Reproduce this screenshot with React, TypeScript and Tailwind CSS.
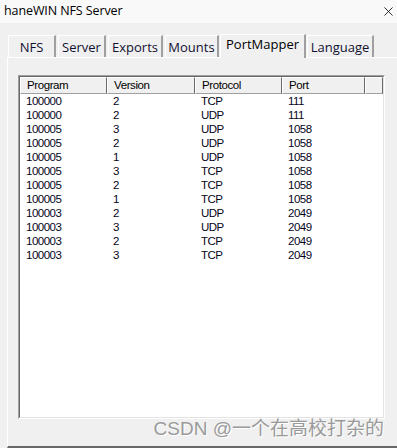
import { X } from 'lucide-react';

const rows = [
  ['100000', '2', 'TCP', '111'],
  ['100000', '2', 'UDP', '111'],
  ['100005', '3', 'UDP', '1058'],
  ['100005', '2', 'UDP', '1058'],
  ['100005', '1', 'UDP', '1058'],
  ['100005', '3', 'TCP', '1058'],
  ['100005', '2', 'TCP', '1058'],
  ['100005', '1', 'TCP', '1058'],
  ['100003', '2', 'UDP', '2049'],
  ['100003', '3', 'UDP', '2049'],
  ['100003', '2', 'TCP', '2049'],
  ['100003', '3', 'TCP', '2049'],
];

const tabs = [
  { label: 'NFS', w: 'w-[48px]' },
  { label: 'Server', w: 'w-[48px]' },
  { label: 'Exports', w: 'w-[55px]' },
  { label: 'Mounts', w: 'w-[54px]' },
  { label: 'PortMapper', w: 'w-[86px]', active: true },
  { label: 'Language', w: 'w-[67px]' },
];

const cols = ['w-[87px]', 'w-[88px]', 'w-[87px]', 'w-[83px]'];

export default function App() {
  return (
    <div className="w-[397px] h-[448px] overflow-hidden bg-[#f0f0f0] flex flex-col font-['Open_Sans',sans-serif]">
      {/* title bar */}
      <div className="h-[23px] bg-[#f9f9f9] flex items-center justify-between pl-[4px] pr-[1px] shrink-0">
        <span className="text-[12.5px] text-black leading-none tracking-[-0.1px]">haneWIN NFS Server</span>
        <X className="w-[15px] h-[15px] text-black" strokeWidth={1.3} />
      </div>

      {/* tabs */}
      <div className="flex items-end pl-[8px] pt-[10px] h-[34px] shrink-0 gap-[2px]">
        {tabs.map((t) =>
          t.active ? (
            <div
              key={t.label}
              className={`${t.w} h-[24px] -mb-px relative z-10 bg-[#f0f0f0] border-t border-l border-white border-r-2 border-r-[#a0a0a0] flex items-start justify-center pt-[3px] text-[13px] text-black leading-none -mx-[1px]`}
            >
              {t.label}
            </div>
          ) : (
            <div
              key={t.label}
              className={`${t.w} h-[22px] bg-[#f0f0f0] border-t border-l border-white border-r-2 border-r-[#a0a0a0] flex items-center justify-center text-[13px] text-[#101030] leading-none pt-[1px]`}
            >
              {t.label}
            </div>
          )
        )}
      </div>

      {/* panel */}
      <div className="ml-[7px] flex-1 border-t border-l border-white border-b-2 border-b-[#696969] flex flex-col pt-[17px] pl-[10px]">
        <div className="w-[367px] h-[344px] bg-white border-t border-l border-[#a0a0a0] border-r border-b border-r-white border-b-white flex flex-col">
          <div className="flex-1 border-t border-l border-[#696969] border-r border-b border-r-[#e3e3e3] border-b-[#e3e3e3] flex flex-col">
            {/* header */}
            <div className="flex h-[17px] shrink-0 text-[11.5px] tracking-[-0.4px] leading-none text-black font-['Liberation_Sans',sans-serif]">
              {['Program', 'Version', 'Protocol', 'Port'].map((h, i) => (
                <div
                  key={h}
                  className={`${cols[i]} h-full bg-[#f0f0f0] border-t border-l border-white border-r border-b border-r-[#696969] border-b-[#a0a0a0] flex items-center pl-[6px]`}
                >
                  {h}
                </div>
              ))}
              <div className="flex-1 h-full bg-[#f0f0f0] border-t border-l border-white border-r border-b border-r-[#696969] border-b-[#a0a0a0]" />
            </div>
            {/* rows */}
            <div className="flex flex-col pt-[1px] text-[11.5px] tracking-[-0.5px] text-[#05051a] font-['Liberation_Sans',sans-serif]">
              {rows.map((r, i) => (
                <div key={i} className="flex h-[14px] items-center leading-none">
                  {r.map((c, j) => (
                    <div key={j} className={`${cols[j]} pl-[6px]`}>
                      {c}
                    </div>
                  ))}
                </div>
              ))}
            </div>
          </div>
        </div>
        <div className="w-[367px] flex justify-end pr-[1px] mt-[-2px]">
          <span className="text-[19px] leading-[24px] text-[#9a9a9a] font-['Liberation_Sans','Noto_Sans_CJK_SC',sans-serif] [text-shadow:1px_1px_0_#ffffff]">
            CSDN @一个在高校打杂的
          </span>
        </div>
      </div>
    </div>
  );
}
